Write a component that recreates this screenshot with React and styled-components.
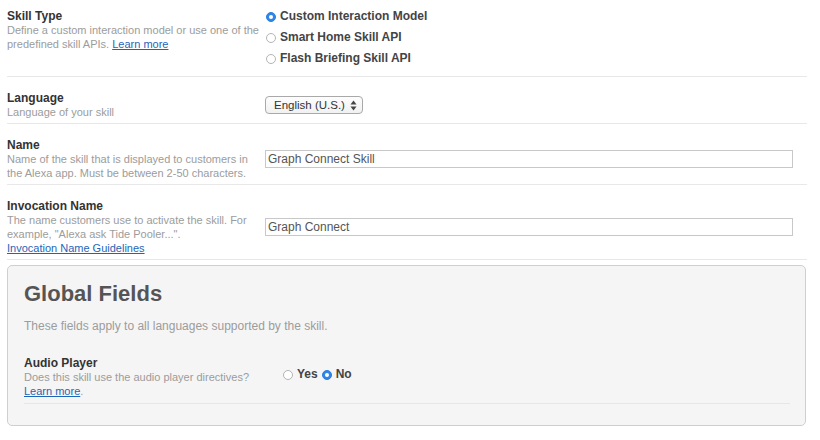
import React from "react";
import styled, { createGlobalStyle } from "styled-components";

const GlobalStyle = createGlobalStyle`
  body {
    margin: 0;
    background: #fff;
    font-family: "Liberation Sans", Arial, sans-serif;
  }
`;

const Page = styled.div`
  width: 800px;
  padding-left: 7px;
`;

const Row = styled.div`
  display: flex;
  align-items: ${(p) => (p.top ? "flex-start" : "center")};
  padding: ${(p) => p.pad || "14px 0 4px"};
  border-bottom: 1px solid #e8e8e8;
`;

const Info = styled.div`
  width: 258px;
  flex-shrink: 0;
  padding-top: ${(p) => p.offset || 0}px;
`;

const Label = styled.div`
  font-size: 12px;
  font-weight: bold;
  line-height: 14px;
  color: #333;
`;

const Desc = styled.div`
  font-size: 11px;
  line-height: 14px;
  color: #9c9c9c;
`;

const Link = styled.a`
  color: #1f65b7;
  text-decoration: underline;
  cursor: pointer;
`;

const BlockLink = styled(Link)`
  display: block;
`;

const Field = styled.div`
  flex: 1;
  display: flex;
  flex-direction: ${(p) => (p.inline ? "row" : "column")};
  align-items: ${(p) => (p.inline ? "center" : "flex-start")};
  padding-top: ${(p) => p.offset || 0}px;
`;

const RadioOption = styled.label`
  display: flex;
  align-items: center;
  height: 21px;
  margin-right: ${(p) => (p.inline ? "3px" : "0")};
  font-size: 12px;
  font-weight: bold;
  color: #444;
`;

const Dot = styled.span`
  width: 10px;
  height: 10px;
  box-sizing: border-box;
  border-radius: 50%;
  margin: 3px 4px 0 1px;
  background: ${(p) => (p.checked ? "#2f86e8" : "#fff")};
  border: 1px solid ${(p) => (p.checked ? "#2a7fe0" : "#b4b4b4")};
  display: flex;
  align-items: center;
  justify-content: center;
  &::after {
    content: "";
    width: 4px;
    height: 4px;
    border-radius: 50%;
    background: #fff;
    display: ${(p) => (p.checked ? "block" : "none")};
  }
`;

const Radio = ({ checked, inline, children }) => (
  <RadioOption inline={inline}>
    <Dot checked={checked} />
    {children}
  </RadioOption>
);

const Select = styled.div`
  display: flex;
  align-items: center;
  justify-content: space-between;
  width: 98px;
  height: 18px;
  box-sizing: border-box;
  padding: 0 5px 0 8px;
  border: 1px solid #a9a9a9;
  border-radius: 4px;
  background: linear-gradient(#fdfdfd, #f1f1f1);
  font-size: 11.5px;
  color: #333;
  white-space: nowrap;
`;

const TextInput = styled.input`
  width: 528px;
  height: 18px;
  box-sizing: border-box;
  padding: 0 2px;
  border: 1px solid #c8c8c8;
  font-family: "Liberation Sans", Arial, sans-serif;
  font-size: 12px;
  color: #555;
  outline: none;
`;

const Panel = styled.div`
  margin-top: 5px;
  width: 799px;
  box-sizing: border-box;
  padding: 15px 16px 21px;
  background: #f5f5f5;
  border: 1px solid #cfcfcf;
  border-radius: 5px;
`;

const PanelTitle = styled.h2`
  margin: 0;
  font-size: 22px;
  line-height: 26px;
  font-weight: bold;
  color: #555;
`;

const PanelIntro = styled.p`
  margin: 12px 0 9px;
  font-size: 12px;
  line-height: 14px;
  color: #9c9c9c;
`;

const PanelRow = styled(Row)`
  width: 766px;
  border-bottom-color: #e6e6e6;
`;

const Arrows = () => (
  <svg width="7" height="11" viewBox="0 0 7 11">
    <path d="M3.5 0.5 L6.5 4.5 L0.5 4.5 Z" fill="#444" />
    <path d="M3.5 10.5 L6.5 6.5 L0.5 6.5 Z" fill="#444" />
  </svg>
);

export default function App() {
  return (
    <Page>
      <GlobalStyle />
      <Row top pad="5px 0 8px">
        <Info offset={4}>
          <Label>Skill Type</Label>
          <Desc>
            Define a custom interaction model or use one of the predefined skill APIs.{" "}
            <Link>Learn more</Link>
          </Desc>
        </Info>
        <Field>
          <Radio checked>Custom Interaction Model</Radio>
          <Radio>Smart Home Skill API</Radio>
          <Radio>Flash Briefing Skill API</Radio>
        </Field>
      </Row>

      <Row>
        <Info>
          <Label>Language</Label>
          <Desc>Language of your skill</Desc>
        </Info>
        <Field>
          <Select>
            <span>English (U.S.)</span>
            <Arrows />
          </Select>
        </Field>
      </Row>

      <Row>
        <Info>
          <Label>Name</Label>
          <Desc>
            Name of the skill that is displayed to customers in the Alexa app. Must be between 2-50
            characters.
          </Desc>
        </Info>
        <Field>
          <TextInput defaultValue="Graph Connect Skill" />
        </Field>
      </Row>

      <Row>
        <Info>
          <Label>Invocation Name</Label>
          <Desc>
            The name customers use to activate the skill. For example, "Alexa ask Tide Pooler...".
            <BlockLink>Invocation Name Guidelines</BlockLink>
          </Desc>
        </Info>
        <Field>
          <TextInput defaultValue="Graph Connect" />
        </Field>
      </Row>

      <Panel>
        <PanelTitle>Global Fields</PanelTitle>
        <PanelIntro>These fields apply to all languages supported by the skill.</PanelIntro>
        <PanelRow top pad="14px 0 5px">
          <Info>
            <Label>Audio Player</Label>
            <Desc>
              Does this skill use the audio player directives?
              <br />
              <Link>Learn more</Link>.
            </Desc>
          </Info>
          <Field inline offset={7}>
            <Radio inline>Yes</Radio>
            <Radio inline checked>No</Radio>
          </Field>
        </PanelRow>
      </Panel>
    </Page>
  );
}
